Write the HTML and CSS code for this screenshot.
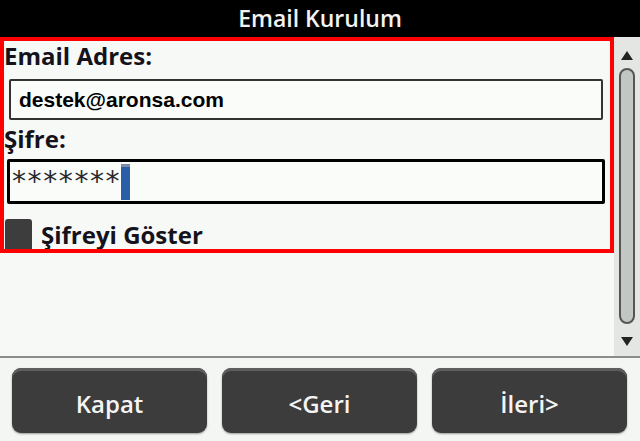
FILE: index.html
```html
<!DOCTYPE html>
<html>
<head>
    <title>Email Kurulum</title>
    <link rel="stylesheet" href="styles.css">
</head>
<body>
    <div class="titlebar">Email Kurulum</div>
    <div class="main">
        <div class="content">
            <div class="form">
                <div class="label">Email Adres:</div>
                <div class="field email">destek@aronsa.com</div>
                <div class="label">Şifre:</div>
                <div class="field password">*******<span class="cursor"></span></div>
                <div class="check-row">
                    <span class="checkbox"></span>
                    <span class="check-label">Şifreyi Göster</span>
                </div>
            </div>
        </div>
        <div class="scrollbar">
            <span class="arrow up"></span>
            <span class="thumb"></span>
            <span class="arrow down"></span>
        </div>
    </div>
    <div class="footer">
        <button type="button">Kapat</button>
        <button type="button">&lt;Geri</button>
        <button type="button">İleri&gt;</button>
    </div>
</body>
</html>
```

FILE: styles.css
```css
body {
    font-family: "Open Sans", "DejaVu Sans", sans-serif;
    margin: 0;
    padding: 0;
    width: 640px;
    height: 441px;
    overflow: hidden;
    background-color: #f4f6f4;
}
.titlebar {
    height: 37px;
    line-height: 37px;
    background-color: #000;
    color: #f2f2f2;
    font-size: 23px;
    font-weight: 600;
    text-align: center;
}
.main {
    display: flex;
    height: 319px;
    background-color: #f6f9f6;
    border-bottom: 2px solid #8c8c8c;
}
.content {
    width: 614px;
}
.form {
    box-sizing: border-box;
    height: 216px;
    border: 4px solid #ff0000;
    overflow: hidden;
}
.label {
    font-size: 24px;
    font-weight: bold;
    line-height: 28px;
    color: #15121c;
    margin-top: 1px;
}
.field {
    box-sizing: border-box;
    border-radius: 2px;
    background-color: #f9fcf9;
}
.email {
    margin: 9px 0 5px 5px;
    width: 594px;
    height: 41px;
    border: 2px solid #333;
    padding-left: 8px;
    font-family: "Liberation Sans", Arial, sans-serif;
    font-weight: bold;
    font-size: 21px;
    line-height: 37px;
    color: #000;
}
.password {
    display: flex;
    align-items: center;
    margin: 6px 0 0 3px;
    width: 598px;
    height: 45px;
    border: 3px solid #000;
    padding-left: 2px;
    font-family: "DejaVu Sans", sans-serif;
    font-size: 28px;
    letter-spacing: 1.6px;
    color: #2a2a2a;
}
.cursor {
    display: inline-block;
    width: 9px;
    height: 36px;
    margin-left: 0;
    background-color: #2a5ea6;
    border-top: 3px solid #7a8ca6;
    box-sizing: border-box;
}
.check-row {
    display: flex;
    align-items: center;
    gap: 9px;
    margin: 14px 0 0 1px;
}
.checkbox {
    width: 27px;
    height: 32px;
    border-radius: 3px;
    background-color: #3d3d3d;
}
.check-label {
    font-size: 24px;
    font-weight: bold;
    color: #15121c;
}
.scrollbar {
    flex: 1;
    display: flex;
    flex-direction: column;
    align-items: center;
    background-color: #e3e6e3;
    padding: 14px 0 10px;
}
.arrow {
    width: 0;
    height: 0;
    border-left: 6px solid transparent;
    border-right: 6px solid transparent;
}
.up {
    border-bottom: 9px solid #222;
}
.down {
    border-top: 9px solid #222;
}
.thumb {
    box-sizing: border-box;
    width: 16px;
    height: 258px;
    margin: 8px 0 13px;
    border: 2px solid #555;
    border-radius: 8px;
    background-color: #c3c7c3;
}
.footer {
    display: flex;
    gap: 15px;
    padding: 10px 13px 0 12px;
}
button {
    width: 195px;
    height: 65px;
    border: none;
    border-radius: 9px;
    background-color: #3c3c3c;
    box-shadow: inset 0 3px 0 #5e5e5e, 0 1px 2px #999;
    color: #f4f4f4;
    font-family: "Open Sans", "DejaVu Sans", sans-serif;
    font-size: 24px;
    font-weight: 600;
    padding-top: 6px;
}
```
